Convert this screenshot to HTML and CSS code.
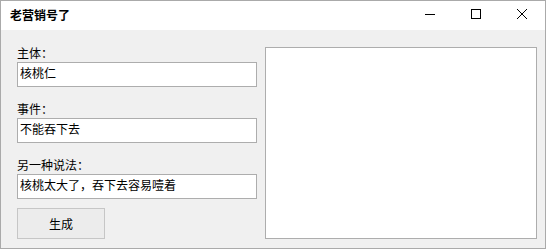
FILE: index.html
```html
<!DOCTYPE html>
<html lang="zh-CN">
<head>
    <meta charset="UTF-8">
    <title>老营销号了</title>
    <link rel="stylesheet" href="styles.css">
</head>
<body>
    <div class="window">
        <!-- Barra de título -->
        <div class="titlebar">
            <span class="title">老营销号了</span>
            <div class="caption-btns">
                <div class="cap-btn">
                    <svg width="10" height="10" viewBox="0 0 10 10"><path d="M0 5.5H10" stroke="#000" stroke-width="1"/></svg>
                </div>
                <div class="cap-btn">
                    <svg width="10" height="10" viewBox="0 0 10 10"><rect x="0.5" y="0.5" width="9" height="9" fill="none" stroke="#000" stroke-width="1"/></svg>
                </div>
                <div class="cap-btn">
                    <svg width="10" height="10" viewBox="0 0 10 10"><path d="M0 0L10 10M10 0L0 10" stroke="#000" stroke-width="1"/></svg>
                </div>
            </div>
        </div>

        <!-- Conteúdo -->
        <div class="content">
            <div class="form">
                <div class="field">
                    <label>主体：</label>
                    <input type="text" value="核桃仁">
                </div>
                <div class="field">
                    <label>事件：</label>
                    <input type="text" value="不能吞下去">
                </div>
                <div class="field">
                    <label>另一种说法：</label>
                    <input type="text" value="核桃太大了，吞下去容易噎着">
                </div>
                <button class="gen-btn">生成</button>
            </div>
            <textarea class="output"></textarea>
        </div>
    </div>
</body>
</html>
```

FILE: styles.css
```css
* {
    margin: 0;
    padding: 0;
    box-sizing: border-box;
    font-family: "Noto Sans CJK SC", "Liberation Sans", sans-serif;
}

body {
    width: 546px;
    height: 249px;
    overflow: hidden;
    background: #fff;
}

.window {
    width: 546px;
    height: 249px;
    border: 1px solid #aaaaaa;
    display: flex;
    flex-direction: column;
    background: #f0f0f0;
}

/* Barra de título */
.titlebar {
    height: 29px;
    background: #fff;
    display: flex;
    align-items: center;
    justify-content: space-between;
}

.title {
    font-size: 12px;
    font-weight: bold;
    color: #000;
    padding-left: 9px;
    line-height: 16px;
    margin-top: -2px;
}

.caption-btns {
    display: flex;
    height: 100%;
}

.cap-btn {
    width: 46px;
    height: 100%;
    display: flex;
    align-items: center;
    justify-content: center;
    padding-bottom: 4px;
}

/* Conteúdo */
.content {
    flex: 1;
    display: flex;
    gap: 8px;
    padding: 15px 7px 9px 16px;
}

.form {
    width: 240px;
    display: flex;
    flex-direction: column;
}

.field {
    display: flex;
    flex-direction: column;
    margin-bottom: 14px;
}

.field label {
    font-size: 12px;
    line-height: 16px;
    color: #000;
    margin-bottom: 1px;
}

.field input {
    width: 240px;
    height: 25px;
    border: 1px solid #adadad;
    background: #fff;
    font-size: 12px;
    padding: 0 2px 5px;
    color: #000;
    outline: none;
}

.gen-btn {
    width: 88px;
    height: 31px;
    margin-top: -5px;
    background: #ececec;
    border: 1px solid #c6c6c6;
    font-size: 12px;
    color: #000;
}

.output {
    width: 272px;
    height: 192px;
    margin-top: 2px;
    border: 1px solid #adadad;
    background: #fff;
    resize: none;
    outline: none;
}
```
